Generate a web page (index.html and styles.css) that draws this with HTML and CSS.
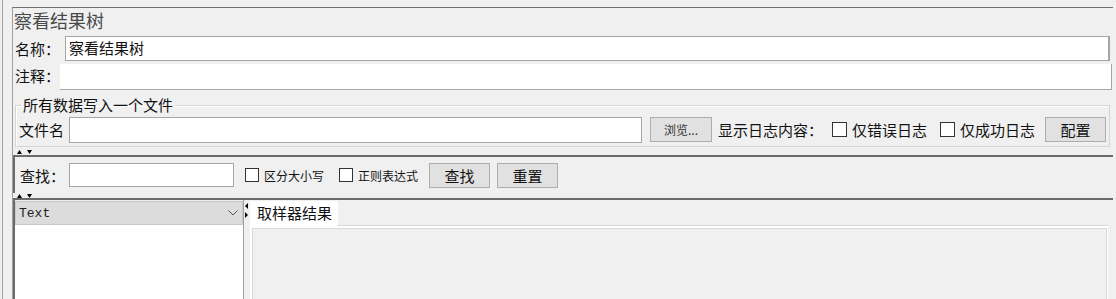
FILE: index.html
```html
<!DOCTYPE html>
<html>
    <head>
        <meta charset="utf-8">
        <link rel="stylesheet" href="styles.css">
    </head>
    <body>
        <div class="window">
            <div class="panel">
                <div class="title">察看结果树</div>

                <div class="name-row">
                    <div class="label">名称：</div>
                    <div class="name-input">察看结果树</div>
                </div>
                <div class="note-row">
                    <div class="label">注释：</div>
                    <div class="note-area"></div>
                </div>

                <fieldset class="group">
                    <legend>所有数据写入一个文件</legend>
                    <div class="file-row">
                        <div>文件名</div>
                        <div class="file-input"></div>
                        <div class="btn browse">浏览...</div>
                        <div class="log-label">显示日志内容：</div>
                        <div class="check first"></div><div>仅错误日志</div>
                        <div class="check second"></div><div>仅成功日志</div>
                        <div class="btn config">配置</div>
                    </div>
                </fieldset>

                <div class="divider tall">
                    <svg width="16" height="5" viewBox="0 0 16 5"><polygon points="0,5 2.5,1 5,5" fill="#000"/><polygon points="10,1 15,1 12.5,5" fill="#000"/></svg>
                </div>

                <div class="search">
                    <div>查找：</div>
                    <div class="search-input"></div>
                    <div class="check small c1"></div><div class="small-text">区分大小写</div>
                    <div class="check small c2"></div><div class="small-text">正则表达式</div>
                    <div class="btn find">查找</div>
                    <div class="btn reset">重置</div>
                </div>

                <div class="divider">
                    <svg width="16" height="5" viewBox="0 0 16 5"><polygon points="0,5 2.5,1 5,5" fill="#000"/><polygon points="10,1 15,1 12.5,5" fill="#000"/></svg>
                </div>

                <div class="results">
                    <div class="left">
                        <div class="combo">
                            <span>Text</span>
                            <svg width="10" height="6" viewBox="0 0 10 6"><polyline points="0.5,0.5 5,5 9.5,0.5" fill="none" stroke="#555" stroke-width="1"/></svg>
                        </div>
                        <div class="list"></div>
                    </div>
                    <div class="vsplit">
                        <svg width="5" height="18" viewBox="0 0 5 18"><polygon points="4,1 4,7 1,4" fill="#000"/><polygon points="1,10 1,16 4,13" fill="#000"/></svg>
                    </div>
                    <div class="right">
                        <div class="tabs">
                            <div class="tab">取样器结果</div>
                        </div>
                        <div class="tabbody">
                            <div class="pane"></div>
                        </div>
                    </div>
                </div>
            </div>
        </div>
    </body>
</html>
```

FILE: styles.css
```css
*{
    box-sizing: border-box;
    margin: 0px;
    padding: 0px;
}
body
{
    background: #f0f0f0;
    font-family: "Noto Sans CJK SC", sans-serif;
    font-size: 15px;
    color: #111;
    width: 1116px;
    height: 299px;
    overflow: hidden;
}
.window
{
    height: 299px;
    margin-left: 2px;
    border-left: 1px solid #a0a0a0;
    padding: 7px 3px 0 9px;
}
.panel
{
    height: 100%;
    border-top: 1px solid #707070;
    border-left: 1px solid #a0a0a0;
    overflow: hidden;
}
.title
{
    height: 28px;
    font-size: 18px;
    line-height: 24px;
    color: #4a4a4a;
    padding-left: 1px;
}

/* name / comment */
.name-row
{
    display: flex;
    height: 25px;
    margin-right: 3px;
}
.name-row .label
{
    width: 52px;
    padding-left: 2px;
    line-height: 25px;
}
.name-input
{
    flex: 1;
    background: #fff;
    border: 1px solid #a5a5a5;
    border-right-width: 2px;
    padding-left: 3px;
    line-height: 22px;
}
.note-row
{
    display: flex;
    height: 26px;
    margin-top: 3px;
    margin-right: 1px;
}
.note-row .label
{
    width: 47px;
    padding-left: 2px;
    line-height: 24px;
}
.note-area
{
    flex: 1;
    background: #fff;
    border-bottom: 1px solid #a5a5a5;
    border-right: 1px solid #a5a5a5;
}

/* file group */
.group
{
    margin: 7px 3px 0 2px;
    border: 1px solid #d5d5d5;
    box-shadow: inset 1px 1px 0 #fff;
    padding: 3px 3px 3px 3px;
}
.group legend
{
    margin-left: 2px;
    padding: 0 2px;
    line-height: 16px;
    font-size: 15px;
}
.file-row
{
    display: flex;
    align-items: center;
    height: 27px;
    white-space: nowrap;
}
.file-input
{
    width: 573px;
    height: 26px;
    margin-left: 5px;
    background: #fff;
    border: 1px solid #a5a5a5;
}
.btn
{
    height: 25px;
    width: 61px;
    background: #e1e1e1;
    border: 1px solid #adadad;
    display: flex;
    align-items: center;
    justify-content: center;
    font-size: 15px;
}
.browse
{
    margin-left: 8px;
    width: 62px;
    font-size: 12px;
    color: #333;
}
.log-label
{
    margin-left: 6px;
}
.check
{
    width: 15px;
    height: 15px;
    border: 1px solid #333;
    background: #fff;
    margin-right: 5px;
}
.check.first { margin-left: 9px; }
.check.second { margin-left: 13px; }
.config { margin-left: 10px; }

/* splitter arrows */
.divider
{
    height: 5px;
    padding-left: 4px;
    display: flex;
    align-items: flex-end;
}
.divider.tall
{
    height: 8px;
    padding-bottom: 1px;
}
.divider svg { display: block; }

/* search */
.search
{
    height: 38px;
    border-top: 2px solid #6b6b6b;
    border-left: 2px solid #6b6b6b;
    display: flex;
    align-items: center;
    padding-left: 5px;
    white-space: nowrap;
}
.search-input
{
    width: 165px;
    height: 24px;
    margin-left: 4px;
    background: #fff;
    border: 1px solid #a5a5a5;
}
.check.small
{
    width: 14px;
    height: 14px;
}
.check.c1 { margin-left: 11px; }
.check.c2 { margin-left: 15px; }
.small-text
{
    font-size: 12px;
}
.find { margin-left: 11px; }
.reset { margin-left: 7px; }

/* results tree */
.results
{
    height: 101px;
    border-top: 2px solid #6b6b6b;
    border-left: 2px solid #6b6b6b;
    display: flex;
}
.left
{
    width: 229px;
    display: flex;
    flex-direction: column;
    border-right: 1px solid #a0a0a0;
}
.combo
{
    height: 24px;
    margin-top: 1px;
    background: #dcdcdc;
    border: 1px solid #c8c8c8;
    display: flex;
    align-items: center;
    justify-content: space-between;
    padding: 0 4px 0 3px;
    font-family: "Liberation Mono", monospace;
    font-size: 13px;
    color: #222;
}
.list
{
    flex: 1;
    background: #fff;
}
.vsplit
{
    width: 6px;
    padding-top: 2px;
}
.vsplit svg { display: block; }
.right
{
    flex: 1;
    margin-right: 5px;
    padding-top: 1px;
}
.tabs
{
    height: 25px;
    border-bottom: 1px solid #d9d9d9;
    display: flex;
}
.tab
{
    width: 88px;
    height: 25px;
    background: #fff;
    padding-left: 7px;
    line-height: 24px;
}
.tabbody
{
    border: 2px solid #fff;
    border-right-width: 1px;
    border-bottom: 0;
    height: 73px;
}
.pane
{
    height: 100%;
    border: 1px solid #d8d8d8;
    border-bottom: 0;
}
```
